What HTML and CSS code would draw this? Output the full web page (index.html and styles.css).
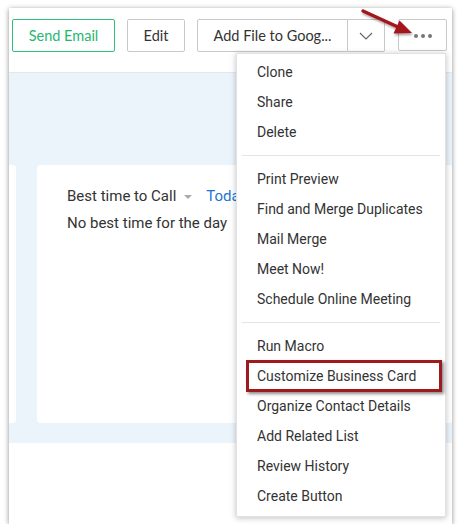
FILE: index.html
```html
<!DOCTYPE html>
<html>
<head>
<meta charset="utf-8">
<link rel="stylesheet" href="styles.css">
</head>
<body>
<div class="frame">
  <div class="toolbar">
    <button class="btn btn-green">Send Email</button>
    <button class="btn btn-edit">Edit</button>
    <div class="split">
      <button class="btn split-main">Add File to Goog...</button>
      <button class="btn split-arrow"><svg width="14" height="8" viewBox="0 0 14 8"><path d="M1 1 L7 7 L13 1" fill="none" stroke="#666" stroke-width="1.2"/></svg></button>
    </div>
    <button class="btn btn-more"><span class="dot"></span><span class="dot"></span><span class="dot"></span></button>
  </div>
  <div class="content">
    <div class="card card-left"></div>
    <div class="card card-main">
      <div class="row-title"><span>Best time to Call</span><span class="caret"></span><span class="today">Today</span></div>
      <div class="row-text">No best time for the day</div>
    </div>
  </div>
  <div class="menu">
    <div class="item">Clone</div>
    <div class="item">Share</div>
    <div class="item">Delete</div>
    <div class="sep"></div>
    <div class="item">Print Preview</div>
    <div class="item">Find and Merge Duplicates</div>
    <div class="item">Mail Merge</div>
    <div class="item">Meet Now!</div>
    <div class="item">Schedule Online Meeting</div>
    <div class="sep"></div>
    <div class="item">Run Macro</div>
    <div class="item highlighted">Customize Business Card<span class="hl-box"></span></div>
    <div class="item">Organize Contact Details</div>
    <div class="item">Add Related List</div>
    <div class="item">Review History</div>
    <div class="item">Create Button</div>
  </div>
  <svg class="arrow" width="70" height="40" viewBox="0 0 70 40">
    <defs>
      <filter id="sh" x="-20%" y="-30%" width="150%" height="180%">
        <feDropShadow dx="1" dy="2" stdDeviation="1.2" flood-color="#000" flood-opacity="0.35"/>
      </filter>
    </defs>
    <g filter="url(#sh)">
      <path d="M4 3 L39 19" stroke="#a3161a" stroke-width="3.4" stroke-linecap="round"/>
      <path d="M53 25 L34.5 25.5 L40.5 12.5 Z" fill="#a3161a"/>
    </g>
  </svg>
</div>
</body>
</html>
```

FILE: styles.css
```css
* { box-sizing: border-box; }
html, body { margin: 0; padding: 0; background: #fff; }
body { font-family: Roboto, "Liberation Sans", Arial, sans-serif; color: #333; }

.frame {
  position: relative;
  margin: 8px 0 0 9px;
  width: 443px;
  height: 516px;
  background: #fff;
  box-shadow: 0 1px 5px rgba(0,0,0,0.45);
  overflow: hidden;
}

.toolbar {
  height: 64px;
  display: flex;
  align-items: flex-start;
  padding: 11px 0 0 3px;
  gap: 12px;
}

.btn {
  font-family: Lato, "Open Sans", Roboto, sans-serif;
  font-size: 14.5px;
  height: 33px;
  background: #fff;
  border: 1px solid #c9c9c9;
  border-radius: 2px;
  color: #333;
  padding: 0;
  display: flex;
  align-items: center;
  justify-content: center;
}
.btn-green { width: 103px; border-color: #2fc07f; color: #1fb870; }
.btn-edit { width: 58px; }
.split { display: flex; margin-left: 0; }
.split-main { width: 151px; border-radius: 2px 0 0 2px; }
.split-arrow { width: 37px; border-left: none; border-radius: 0 2px 2px 0; }
.btn-more { width: 49px; height: 32px; margin-left: 1px; gap: 3px; padding-top: 2px; }
.dot { width: 4px; height: 4px; border-radius: 50%; background: #777; }

.content {
  height: 371px;
  background: #ebf3fb;
  border-top: 1px solid #e0e8f0;
  padding-top: 92px;
  display: flex;
  gap: 21px;
}
.card { background: #fff; height: 258px; border-radius: 3px; }
.card-left { width: 7px; border-radius: 0 3px 3px 0; }
.card-main { flex: 1; padding: 20px 0 0 30px; }
.row-title { display: flex; align-items: center; font-size: 15px; height: 22px; }
.caret {
  width: 0; height: 0;
  border-left: 4px solid transparent;
  border-right: 4px solid transparent;
  border-top: 4px solid #aaa;
  margin: 2px 0 0 8px;
}
.today { color: #1b74d4; margin-left: 14px; }
.row-text { font-size: 15px; margin-top: 7px; }

.menu {
  position: absolute;
  left: 227px;
  top: 45px;
  width: 210px;
  background: #fff;
  box-shadow: 0 1px 6px rgba(0,0,0,0.25);
  border: 1px solid #e2e2e2;
  padding: 3px 0 5px;
  font-size: 14px;
}
.item {
  position: relative;
  height: 30px;
  line-height: 30px;
  padding-left: 20px;
  color: #333;
}
.sep { height: 1px; background: #e4e4e4; margin: 8px 5px 8px 5px; }
.hl-box {
  position: absolute;
  left: 9px;
  right: 3px;
  top: -1px;
  bottom: -1px;
  border: 3px solid #9e1a1e;
  box-shadow: 2px 2px 3px rgba(0,0,0,0.45);
}

.arrow { position: absolute; left: 350px; top: 0; }
```
